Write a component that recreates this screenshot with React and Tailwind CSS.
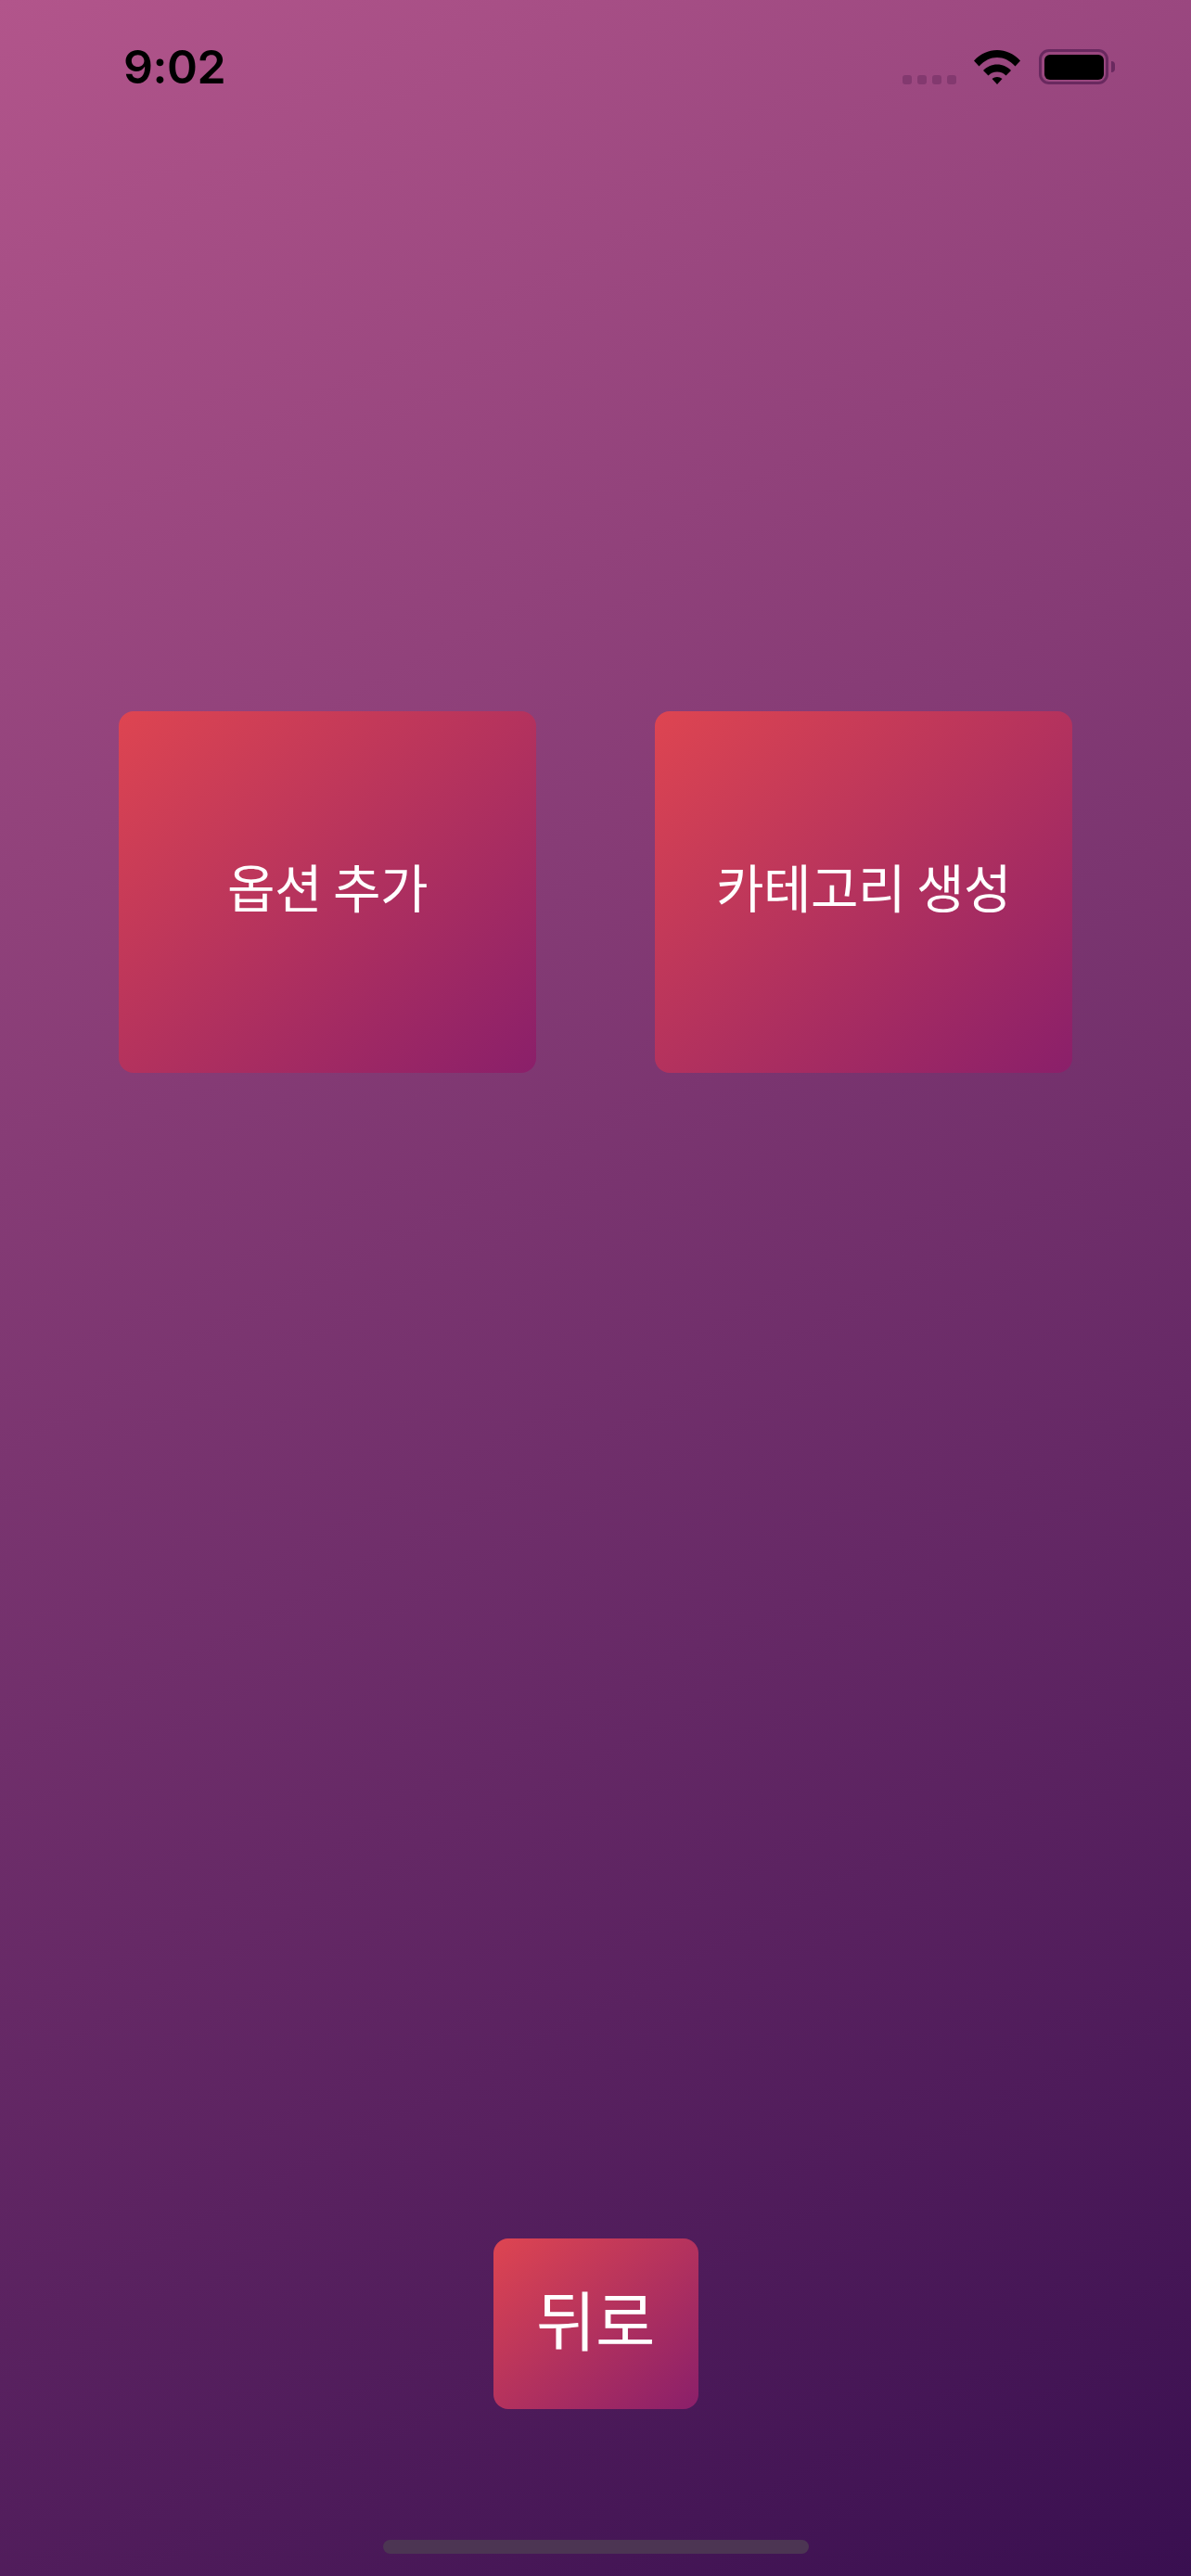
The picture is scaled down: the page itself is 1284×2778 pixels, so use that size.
import React from "react";

const kr = "font-['Noto_Sans_CJK_KR',sans-serif]";

function StatusBar() {
  return (
    <div className="flex h-[132px] items-start justify-between pl-[133px] pr-[82px]">
      <span className="mt-[39px] font-['Inter',sans-serif] text-[50px] leading-[66px] font-semibold tracking-[-0.5px] text-black">
        9:02
      </span>
      <div className="mt-[53px] flex items-end">
        <div className="flex gap-[6px]">
          <span className="h-[10px] w-[10px] rounded-[3px] bg-[#83396f]" />
          <span className="h-[10px] w-[10px] rounded-[3px] bg-[#83396f]" />
          <span className="h-[10px] w-[10px] rounded-[3px] bg-[#83396f]" />
          <span className="h-[10px] w-[10px] rounded-[3px] bg-[#83396f]" />
        </div>
        <svg className="ml-[19px]" width="50" height="38" viewBox="0 0 50 38">
          <path d="M0 12.500C7 5 15.500 1 25 1s18 4 25 11.500l-5.500 6C38.500 12 32 9 25 9S11.500 12 5.500 18.500Z" fill="#000" />
          <path d="M10 23C14 19 19 16.500 25 16.500S36 19 40 23l-5.500 5.500C32 26 29 24.500 25 24.500s-7 1.500-9.500 4Z" fill="#000" />
          <path d="M19.500 32c1.500-1.300 3.500-2 5.500-2s4 .7 5.500 2L25 38Z" fill="#000" />
        </svg>
        <div className="ml-[20px] flex items-center">
          <div className="flex h-[38px] w-[75px] items-center justify-center rounded-[11px] border-[3px] border-[#69295f]">
            <div className="h-[27px] w-[64px] rounded-[6px] bg-black" />
          </div>
          <div className="ml-[3px] h-[12px] w-[4px] rounded-r-full bg-[#69295f]" />
        </div>
      </div>
    </div>
  );
}

function ActionButton({ label }) {
  return (
    <button className="flex h-[390px] w-[450px] items-center justify-center rounded-[16px] bg-[linear-gradient(to_bottom_right,#de4551,#8a1f6a)] pb-[14px]">
      <span className={`${kr} text-[56px] leading-[64px] font-normal tracking-[-0.5px] text-white`}>{label}</span>
    </button>
  );
}

export default function App() {
  return (
    <div className="flex h-[2778px] w-[1284px] flex-col bg-[linear-gradient(152deg,#b2558b_0%,#390f50_100%)]">
      <StatusBar />
      <div className="mt-[635px] flex justify-between px-[128px]">
        <ActionButton label="옵션 추가" />
        <ActionButton label="카테고리 생성" />
      </div>
      <div className="mt-[1257px] flex justify-center">
        <button className="flex h-[184px] w-[221px] items-center justify-center rounded-[16px] bg-[linear-gradient(to_bottom_right,#de4551,#8a1f6a)] pb-[12px]">
          <span className={`${kr} text-[70px] leading-[80px] font-normal tracking-[-0.5px] text-white`}>뒤로</span>
        </button>
      </div>
      <div className="mt-[141px] flex justify-center">
        <div className="h-[15px] w-[459px] rounded-full bg-[#4c3553]" />
      </div>
    </div>
  );
}
